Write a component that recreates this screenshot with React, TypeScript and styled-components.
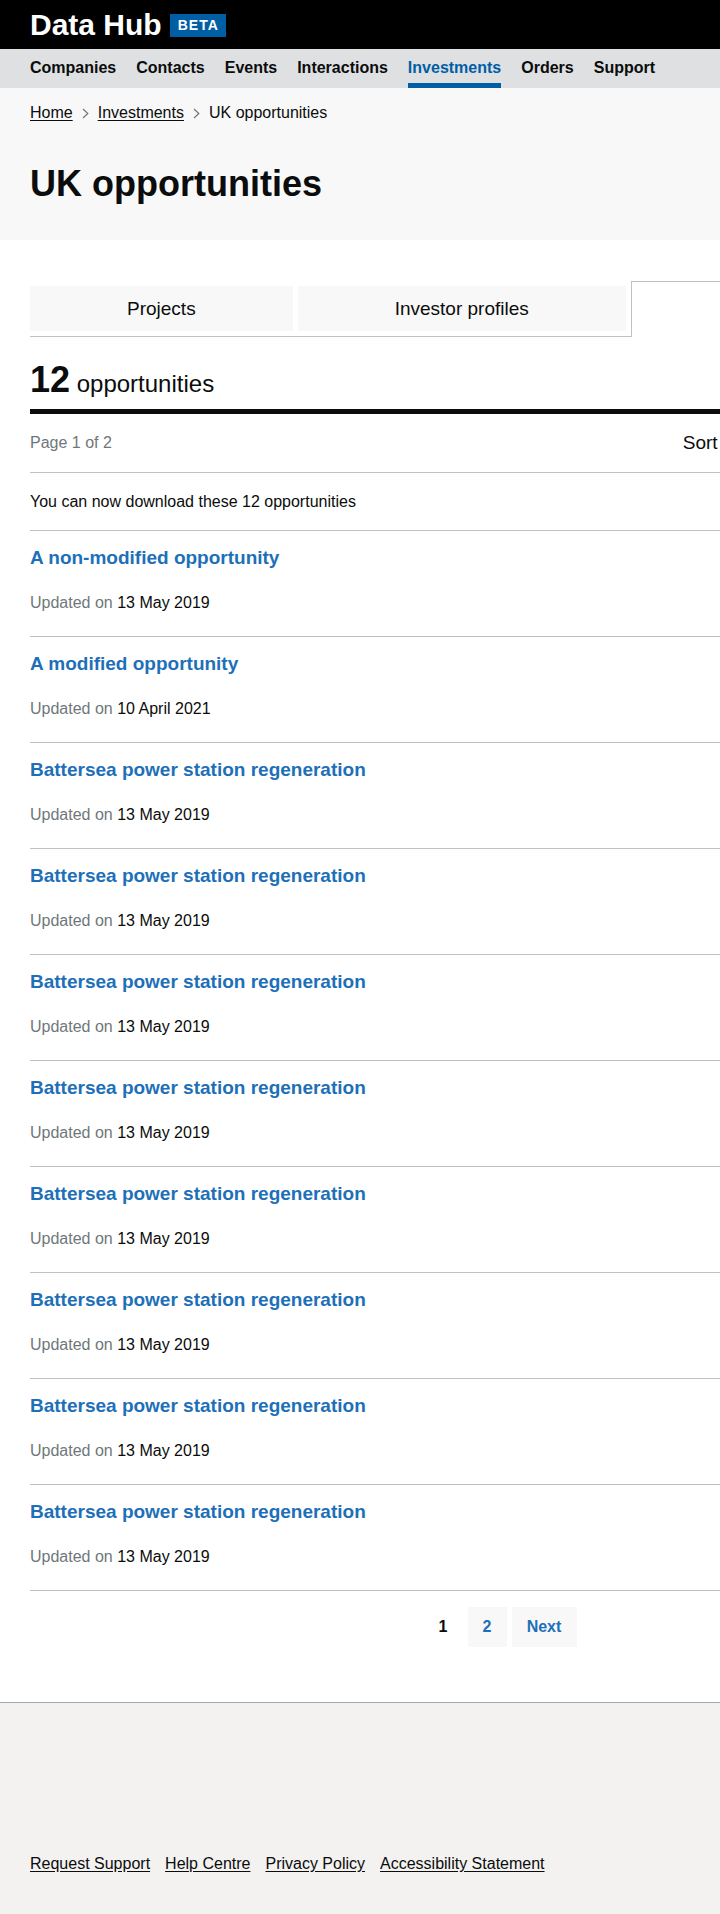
import React from "react";
import styled, { createGlobalStyle } from "styled-components";

const GlobalStyle = createGlobalStyle`
  html, body {
    margin: 0;
    padding: 0;
    overflow-x: hidden;
    background: #ffffff;
  }
  body {
    font-family: "Liberation Sans", Arial, sans-serif;
    color: #0b0c0c;
    -webkit-font-smoothing: antialiased;
  }
  * { box-sizing: border-box; }
`;

const Page = styled.div`
  min-width: 1000px;
  display: flex;
  flex-direction: column;
  min-height: 1914px;
`;

const Header = styled.header`
  background: #000000;
  height: 49px;
  display: flex;
  align-items: center;
  padding: 0 30px;
  gap: 8px;
`;

const Logo = styled.span`
  color: #ffffff;
  font-weight: 700;
  font-size: 30px;
  line-height: 30px;
`;

const Badge = styled.span`
  background: #005ea5;
  color: #ffffff;
  font-weight: 700;
  font-size: 14px;
  letter-spacing: 1px;
  height: 23px;
  display: flex;
  align-items: center;
  padding: 0 7px 0 8px;
  margin-top: 1px;
`;

const NavBar = styled.nav`
  background: #dee0e2;
  height: 39px;
  display: flex;
  padding: 0 30px;
  gap: 20px;
`;

const NavLink = styled.a<{ $active?: boolean }>`
  display: block;
  font-weight: 700;
  font-size: 16px;
  line-height: 20px;
  padding-top: 9px;
  padding-bottom: 5px;
  border-bottom: 5px solid ${(p) => (p.$active ? "#005ea5" : "transparent")};
  color: ${(p) => (p.$active ? "#005ea5" : "#0b0c0c")};
  text-decoration: none;
`;

const Masthead = styled.section`
  background: #f8f8f8;
  padding: 15px 30px 36px;
`;

const Breadcrumbs = styled.ol`
  list-style: none;
  margin: 0;
  padding: 0;
  display: flex;
  align-items: center;
  font-size: 16px;
  line-height: 20px;
`;

const Crumb = styled.li`
  display: flex;
  align-items: center;
`;

const CrumbLink = styled.a`
  color: #0b0c0c;
  text-decoration: underline;
  text-underline-offset: 2px;
`;

const Chevron = styled.svg`
  width: 7px;
  height: 11px;
  margin: 0 9px;
`;

const PageTitle = styled.h1`
  margin: 41px 0 0;
  font-size: 36px;
  line-height: 40px;
  font-weight: 700;
`;

const Main = styled.main`
  padding: 41px 30px 55px;
  width: 1000px;
`;

const TabList = styled.div`
  display: flex;
  align-items: flex-start;
  gap: 5px;
  height: 56px;
  border-bottom: 1px solid #bfc1c3;
`;

const Tab = styled.a<{ $selected?: boolean }>`
  display: flex;
  align-items: center;
  justify-content: center;
  font-size: 19px;
  color: #0b0c0c;
  text-decoration: none;
  white-space: nowrap;
  padding: 0 97px;
  ${(p) =>
    p.$selected
      ? `
    background: #ffffff;
    height: 56px;
    margin-bottom: -1px;
    border: 1px solid #bfc1c3;
    border-bottom: none;
  `
      : `
    background: #f8f8f8;
    height: 45px;
    margin-top: 5px;
  `}
`;

const CountHeading = styled.h2`
  margin: 23px 0 0;
  padding-bottom: 9px;
  border-bottom: 5px solid #0b0c0c;
  font-weight: 700;
  font-size: 36px;
  line-height: 40px;
`;

const CountLabel = styled.span`
  font-size: 24px;
  line-height: 24px;
  font-weight: 400;
`;

const Toolbar = styled.div`
  height: 59px;
  border-bottom: 1px solid #bfc1c3;
  display: flex;
  align-items: center;
  justify-content: space-between;
`;

const PageInfo = styled.span`
  font-size: 16px;
  color: #6f777b;
`;

const SortGroup = styled.label`
  display: flex;
  align-items: center;
  gap: 10px;
  font-size: 19px;
  color: #0b0c0c;
`;

const SortSelect = styled.select`
  width: 217px;
  height: 40px;
  font-family: inherit;
  font-size: 19px;
  border: 2px solid #0b0c0c;
  background: #ffffff;
`;

const Notice = styled.p`
  margin: 0;
  font-size: 16px;
  line-height: 20px;
  padding: 19px 0 18px;
  border-bottom: 1px solid #bfc1c3;
`;

const ResultList = styled.ol`
  list-style: none;
  margin: 0;
  padding: 0;
`;

const Result = styled.li`
  padding: 15px 0 23px;
  border-bottom: 1px solid #bfc1c3;
`;

const ResultTitle = styled.a`
  display: block;
  font-size: 19px;
  line-height: 24px;
  font-weight: 700;
  color: #1d70b8;
  text-decoration: none;
  margin-bottom: 23px;
`;

const Meta = styled.div`
  font-size: 16px;
  line-height: 20px;
  color: #0b0c0c;
`;

const MetaLabel = styled.span`
  color: #6f777b;
`;

const Pagination = styled.nav`
  display: flex;
  justify-content: center;
  gap: 5px;
  margin-top: 16px;
`;

const PageItem = styled.a<{ $current?: boolean; $wide?: boolean }>`
  display: flex;
  align-items: center;
  justify-content: center;
  height: 40px;
  width: ${(p) => (p.$wide ? "65px" : "39px")};
  font-size: 16px;
  font-weight: 700;
  text-decoration: none;
  background: ${(p) => (p.$current ? "transparent" : "#f8f8f8")};
  color: ${(p) => (p.$current ? "#0b0c0c" : "#1d70b8")};
`;

const Footer = styled.footer`
  flex: 1;
  background: #f3f2f1;
  border-top: 1px solid #a1acb2;
  padding: 151px 30px 40px;
`;

const FooterLinks = styled.div`
  display: flex;
  gap: 15px;
  font-size: 16px;
  line-height: 20px;
`;

const FooterLink = styled.a`
  color: #0b0c0c;
  text-decoration: underline;
  text-underline-offset: 2px;
`;

const results = [
  { title: "A non-modified opportunity", date: "13 May 2019" },
  { title: "A modified opportunity", date: "10 April 2021" },
  ...Array.from({ length: 8 }, () => ({
    title: "Battersea power station regeneration",
    date: "13 May 2019",
  })),
];

const ChevronIcon = () => (
  <Chevron viewBox="0 0 7 11" aria-hidden="true">
    <polyline points="1,1 5.8,5.5 1,10" fill="none" stroke="#6f777b" strokeWidth="1.2" />
  </Chevron>
);

export default function App() {
  const nav = ["Companies", "Contacts", "Events", "Interactions", "Investments", "Orders", "Support"];
  return (
    <Page>
      <GlobalStyle />
      <Header>
        <Logo>Data Hub</Logo>
        <Badge>BETA</Badge>
      </Header>
      <NavBar>
        {nav.map((n) => (
          <NavLink key={n} href="#" $active={n === "Investments"}>
            {n}
          </NavLink>
        ))}
      </NavBar>
      <Masthead>
        <Breadcrumbs>
          <Crumb>
            <CrumbLink href="#">Home</CrumbLink>
            <ChevronIcon />
          </Crumb>
          <Crumb>
            <CrumbLink href="#">Investments</CrumbLink>
            <ChevronIcon />
          </Crumb>
          <Crumb>UK opportunities</Crumb>
        </Breadcrumbs>
        <PageTitle>UK opportunities</PageTitle>
      </Masthead>
      <Main>
        <TabList>
          <Tab href="#">Projects</Tab>
          <Tab href="#">Investor profiles</Tab>
          <Tab href="#" $selected>
            UK opportunities
          </Tab>
        </TabList>
        <CountHeading>
          12<CountLabel>{" opportunities"}</CountLabel>
        </CountHeading>
        <Toolbar>
          <PageInfo>Page 1 of 2</PageInfo>
          <SortGroup>
            Sort by
            <SortSelect defaultValue="recent">
              <option value="recent">Recently updated</option>
            </SortSelect>
          </SortGroup>
        </Toolbar>
        <Notice>You can now download these 12 opportunities</Notice>
        <ResultList>
          {results.map((r, i) => (
            <Result key={i}>
              <ResultTitle href="#">{r.title}</ResultTitle>
              <Meta>
                <MetaLabel>Updated on</MetaLabel> {r.date}
              </Meta>
            </Result>
          ))}
        </ResultList>
        <Pagination>
          <PageItem $current>1</PageItem>
          <PageItem href="#">2</PageItem>
          <PageItem href="#" $wide>
            Next
          </PageItem>
        </Pagination>
      </Main>
      <Footer>
        <FooterLinks>
          <FooterLink href="#">Request Support</FooterLink>
          <FooterLink href="#">Help Centre</FooterLink>
          <FooterLink href="#">Privacy Policy</FooterLink>
          <FooterLink href="#">Accessibility Statement</FooterLink>
        </FooterLinks>
      </Footer>
    </Page>
  );
}
